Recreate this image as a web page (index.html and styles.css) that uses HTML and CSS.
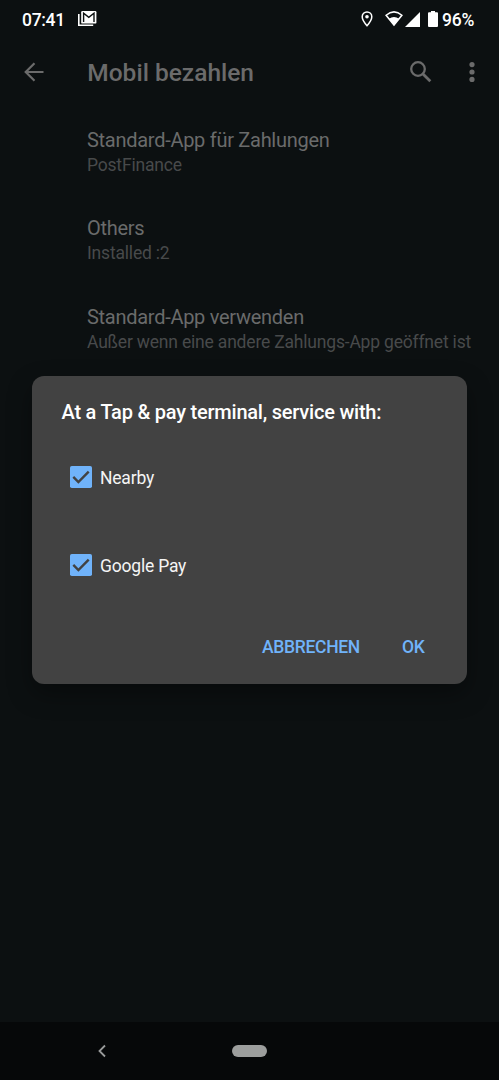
FILE: index.html
```html
<!DOCTYPE html>
<html lang="de">
<head>
<meta charset="utf-8">
<meta name="viewport" content="width=device-width">
<title>Mobil bezahlen</title>
<link rel="stylesheet" href="styles.css">
</head>
<body>
<div class="screen">
  <header class="status">
    <span class="clock">07:41</span>
    <svg class="mail" width="19" height="16" viewBox="0 0 19 16"><path d="M.8 3v11.2h14.4" fill="none" stroke="#fff" stroke-width="1.6"/><rect x="3.2" width="15.2" height="12.6" rx="1.2" fill="#fff"/><path d="M5.6 11V2.2l5.2 4.1L16 2.2V11" fill="none" stroke="#0c1011" stroke-width="1.4"/></svg>
    <div class="indicators">
      <svg class="pin" width="12" height="16" viewBox="0 0 12 16"><path d="M6 .9a4.8 4.8 0 0 0-4.8 4.8C1.2 9.2 6 14.7 6 14.7s4.8-5.5 4.8-9A4.8 4.8 0 0 0 6 .9Z" fill="none" stroke="#fff" stroke-width="1.5"/><circle cx="6" cy="5.7" r="1.8" fill="#fff"/></svg>
      <svg class="wifi" width="18" height="16" viewBox="0 0 18 16"><path d="M1.1 4.3Q9-2.5 16.9 4.3L9 14Z" fill="none" stroke="#fff" stroke-width="1.5"/><path d="M3.9 7.8Q9 4.2 14.1 7.8L9 14.6Z" fill="#fff"/></svg>
      <svg class="signal" width="15" height="15" viewBox="0 0 15 15"><path d="M15 0v15H0Z" fill="#fff"/></svg>
      <svg class="battery" width="10" height="16" viewBox="0 0 10 16"><path d="M3 0h4v1.2h2q1 0 1 1V15q0 1-1 1H1q-1 0-1-1V2.2q0-1 1-1h2Z" fill="#fff"/></svg>
      <span class="percent">96%</span>
    </div>
  </header>
  <div class="appbar">
    <svg class="back" width="20" height="20" viewBox="0 0 20 20"><path d="M19.5 10H2M10.5 1.2 1.7 10l8.8 8.8" fill="none" stroke="#6b6b6b" stroke-width="2.2"/></svg>
    <h1 class="heading">Mobil bezahlen</h1>
    <svg class="search" width="22" height="22" viewBox="0 0 22 22"><circle cx="8" cy="8" r="6.8" fill="none" stroke="#6b6b6b" stroke-width="2.3"/><path d="m13 13 7.3 7.3" stroke="#6b6b6b" stroke-width="2.8"/></svg>
    <svg class="more" width="6" height="20" viewBox="0 0 6 20"><g fill="#6b6b6b"><circle cx="3" cy="2.6" r="2.6"/><circle cx="3" cy="10" r="2.6"/><circle cx="3" cy="17.4" r="2.6"/></g></svg>
  </div>
  <main class="settings">
    <section class="item"><div class="name">Standard-App für Zahlungen</div><div class="value">PostFinance</div></section>
    <section class="item"><div class="name">Others</div><div class="value">Installed :2</div></section>
    <section class="item"><div class="name">Standard-App verwenden</div><div class="value">Außer wenn eine andere Zahlungs-App geöffnet ist</div></section>
  </main>
  <nav class="navbar">
    <svg class="navback" width="8" height="14" viewBox="0 0 8 14"><path d="M7 1.5 1.5 7 7 12.5" fill="none" stroke="#999b9b" stroke-width="1.8"/></svg>
    <span class="pill"></span>
  </nav>
  <div class="dialog" role="dialog">
    <h2 class="question">At a Tap &amp; pay terminal, service with:</h2>
    <div class="option"><svg width="22" height="22" viewBox="0 0 22 22"><rect width="22" height="22" rx="1.8" fill="#70b3fa"/><path d="m3.3 10.9 5.1 5.1L18.7 5.7" fill="none" stroke="#424242" stroke-width="2.4"/></svg><span>Nearby</span></div>
    <div class="option"><svg width="22" height="22" viewBox="0 0 22 22"><rect width="22" height="22" rx="1.8" fill="#70b3fa"/><path d="m3.3 10.9 5.1 5.1L18.7 5.7" fill="none" stroke="#424242" stroke-width="2.4"/></svg><span>Google Pay</span></div>
    <div class="actions"><span class="cancel">ABBRECHEN</span><span class="ok">OK</span></div>
  </div>
</div>
</body>
</html>
```
FILE: styles.css
```css
* { box-sizing: border-box; }
body { margin: 0; background: #0c1011; font-family: Roboto, sans-serif; }
svg { display: block; flex: none; }
h1, h2 { margin: 0; font-weight: 500; }
.screen { position: relative; width: 499px; height: 1080px; display: flex; flex-direction: column; overflow: hidden; white-space: nowrap; }
.status { display: flex; height: 40px; align-items: center; padding-left: 22px; padding-right: 25px; color: #fff; font-size: 17.5px; letter-spacing: -.3px; font-weight: 500; }
.clock, .percent { line-height: 20px; }
.mail { margin-left: 13px; margin-top: -2px; }
.indicators { display: flex; align-items: center; margin-left: auto; }
.pin, .wifi { margin-top: -2px; }
.wifi { margin-left: 12px; }
.signal { margin-left: 2px; margin-top: -2px; }
.battery { margin-left: 8px; margin-top: -2px; }
.percent { margin-left: 4px; }
.appbar { display: flex; height: 64px; align-items: center; padding: 0 24px; color: #6b6b6b; }
.heading { margin-left: 43.3px; font-size: 24.5px; line-height: 30px; margin-top: 2px; }
.search { margin-left: auto; }
.more { margin-left: 37.5px; }
.settings { flex: 1; padding: 23.5px 0 0 87px; }
.item { height: 88.5px; }
.name { color: #6a6b6b; font-size: 20px; letter-spacing: -.28px; line-height: 25px; }
.value { color: #484a4b; font-size: 17.5px; letter-spacing: -.19px; line-height: 25px; }
.navbar { display: flex; height: 58px; align-items: center; background: #060809; padding-left: 98px; }
.pill { width: 35px; height: 12px; border-radius: 6px; margin-left: 126px; background: #9c9e9d; }
.dialog { position: absolute; left: 32px; top: 376px; width: 435px; height: 308px; border-radius: 12px; background: #424242; box-shadow: 0 10px 24px rgba(0,0,0,.35); color: #fff; padding: 22px 37px 0 38px; }
.question { margin-left: -8.5px; font-size: 20px; letter-spacing: -.22px; line-height: 28px; }
.option { display: flex; height: 87.5px; align-items: center; font-size: 17.5px; letter-spacing: -.2px; line-height: 24px; gap: 8px; color: #f5f5f5; }
.option span { margin-top: 2.4px; }
.question + .option { margin-top: 7.4px; }
.actions { display: flex; justify-content: flex-end; gap: 42px; margin-top: 26.6px; margin-right: 5.5px; color: #70b3fa; font-size: 17.5px; letter-spacing: -.3px; font-weight: 500; line-height: 24px; }
```
